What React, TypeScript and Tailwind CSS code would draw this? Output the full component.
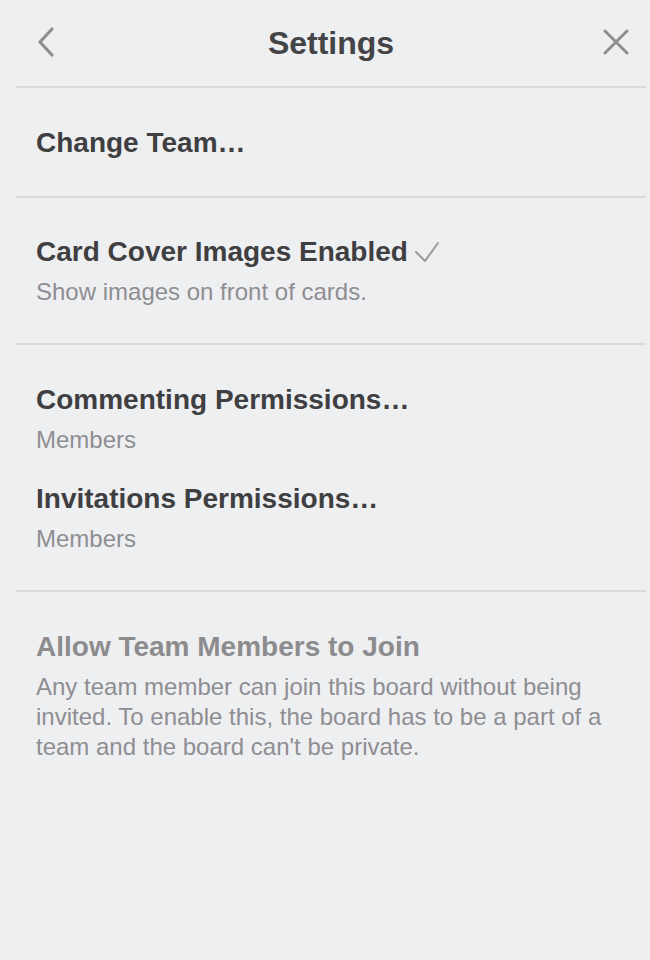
import React from "react";

const font = { fontFamily: '"Liberation Sans", Arial, sans-serif' };

function Divider() {
  return <div className="ml-[16px] mr-[4px] h-[2px] bg-[#d9dadc]" />;
}

function Title({ children, muted }: { children: React.ReactNode; muted?: boolean }) {
  return (
    <div className={`text-[28px] leading-[32px] font-bold ${muted ? "text-[#8c8c8e]" : "text-[#3f3f42]"}`}>
      {children}
    </div>
  );
}

function Sub({ children }: { children: React.ReactNode }) {
  return <div className="mt-[9px] text-[24px] leading-[30px] text-[#8e8e92]">{children}</div>;
}

export default function App() {
  return (
    <div className="w-[650px] h-[960px] bg-[#eeeff1]" style={font}>
      <div className="relative h-[86px] flex items-center justify-center">
        <svg className="absolute left-[34px] top-[26px]" width="24" height="32" viewBox="0 0 24 32">
          <path d="M18 3 L6 16 L18 29" fill="none" stroke="#8e8e90" strokeWidth="3.2" strokeLinecap="round" strokeLinejoin="round" />
        </svg>
        <div className="text-[32px] font-bold text-[#444447] mt-[-1px] mr-[-12px]">Settings</div>
        <svg className="absolute left-[602px] top-[28px]" width="28" height="28" viewBox="0 0 28 28">
          <path d="M3 3 L25 25 M25 3 L3 25" fill="none" stroke="#8e8e90" strokeWidth="3" strokeLinecap="round" />
        </svg>
      </div>
      <Divider />
      <div className="h-[108px] flex items-center px-[36px] pt-[2px]">
        <Title>Change Team…</Title>
      </div>
      <Divider />
      <div className="px-[36px] pt-[38px] pb-[36px]">
        <div className="flex items-center">
          <Title>Card Cover Images Enabled</Title>
          <svg className="ml-[6px] mt-[-1px]" width="26" height="22" viewBox="0 0 26 22">
            <path d="M2 11 L11 20 L24 2" fill="none" stroke="#9a9a9c" strokeWidth="2" strokeLinecap="round" strokeLinejoin="round" />
          </svg>
        </div>
        <Sub>Show images on front of cards.</Sub>
      </div>
      <Divider />
      <div className="px-[36px] pt-[39px] pb-[36px]">
        <Title>Commenting Permissions…</Title>
        <Sub>Members</Sub>
        <div className="mt-[28px]">
          <Title>Invitations Permissions…</Title>
        </div>
        <Sub>Members</Sub>
      </div>
      <Divider />
      <div className="pl-[36px] pt-[39px] pr-[30px]">
        <Title muted>Allow Team Members to Join</Title>
        <Sub>
          Any team member can join this board without being invited. To enable this, the board has to be a part of a
          team and the board can't be private.
        </Sub>
      </div>
    </div>
  );
}
